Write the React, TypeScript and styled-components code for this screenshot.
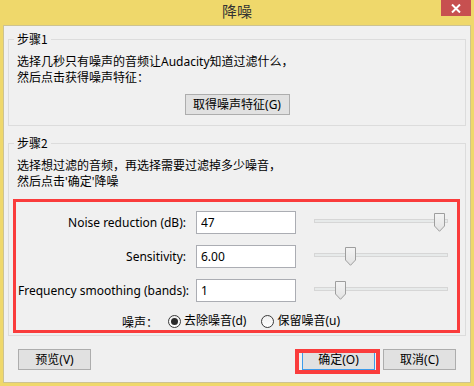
import { Fragment } from "react";
import styled, { createGlobalStyle } from "styled-components";

const GlobalStyle = createGlobalStyle`
  html, body {
    margin: 0;
    padding: 0;
    background: #efd86b;
  }
  body {
    font-family: "Noto Sans", "Noto Sans CJK SC", sans-serif;
    font-size: 12px;
    color: #000;
  }
`;

type SliderRowType = {
    label: string
    value: string
    pos: number
}

const rows: SliderRowType[] = [
    { label: "Noise reduction (dB):", value: "47", pos: 47 / 48 },
    { label: "Sensitivity:", value: "6.00", pos: 6 / 24 },
    { label: "Frequency smoothing (bands):", value: "1", pos: 1 / 6 },
];

const THUMB_TRAVEL = 123;

const Thumb = () => (
    <svg width="11" height="19" viewBox="0 0 11 19">
        <defs>
            <linearGradient id="thumbFill" x1="0" y1="0" x2="0" y2="1">
                <stop offset="0" stopColor="#f4f4f4" />
                <stop offset="1" stopColor="#e2e2e2" />
            </linearGradient>
        </defs>
        <path d="M0.5 0.5 H10.5 V13 L5.5 18.3 L0.5 13 Z" fill="url(#thumbFill)" stroke="#9e9e9e" />
    </svg>
);

const Radio = (props: { checked?: boolean, text: string }) => {
    return (
        <RadioOption>
            <RadioCircle>{props.checked && <RadioDot />}</RadioCircle>
            <span>{props.text}</span>
        </RadioOption>
    );
}

export default function App() {
    return (
        <>
            <GlobalStyle />
            <Window>
                <TitleBar>
                    <Title>降噪</Title>
                    <CloseButton>
                        <svg width="10" height="9" viewBox="0 0 10 9">
                            <path d="M1 0.5 L9 8.5 M9 0.5 L1 8.5" stroke="#fff" strokeWidth="2" />
                        </svg>
                    </CloseButton>
                </TitleBar>
                <Content>
                    <Group $pad="7px 5px 10px">
                        <Legend>步骤1</Legend>
                        <Description>
                            选择几秒只有噪声的音频让Audacity知道过滤什么，<br />
                            然后点击获得噪声特征：
                        </Description>
                        <CenterRow>
                            <Button $width={105}>取得噪声特征(G)</Button>
                        </CenterRow>
                    </Group>
                    <Group $pad="7px 5px 2px" $top={9}>
                        <Legend>步骤2</Legend>
                        <Description>
                            选择想过滤的音频，再选择需要过滤掉多少噪音，<br />
                            然后点击'确定'降噪
                        </Description>
                        <Highlight>
                            {rows.map((r) => (
                                <Fragment key={r.label}>
                                    <FieldLabel>{r.label}</FieldLabel>
                                    <Field defaultValue={r.value} />
                                    <Slider>
                                        <Track />
                                        <ThumbWrap style={{ left: Math.round(r.pos * THUMB_TRAVEL) }}>
                                            <Thumb />
                                        </ThumbWrap>
                                    </Slider>
                                </Fragment>
                            ))}
                            <RadioRow>
                                <RadioTitle>噪声：</RadioTitle>
                                <Radio checked text="去除噪音(d)" />
                                <Radio text="保留噪音(u)" />
                            </RadioRow>
                        </Highlight>
                    </Group>
                    <Footer>
                        <Button $width={73}>预览(V)</Button>
                        <FooterRight>
                            <Annotated>
                                <Button $width={73} $primary>确定(O)</Button>
                            </Annotated>
                            <Button $width={73}>取消(C)</Button>
                        </FooterRight>
                    </Footer>
                </Content>
            </Window>
        </>
    );
}

const Window = styled.div`
    width: 474px;
    height: 386px;
    display: flex;
    flex-direction: column;
    background: #efd86b;
`

const TitleBar = styled.div`
    height: 25px;
    display: grid;
    grid-template-columns: 1fr auto 1fr;
    align-items: start;
    padding: 0 3px;
`

const Title = styled.div`
    grid-column: 2;
    font-family: "Noto Sans CJK SC", sans-serif;
    font-size: 15px;
    line-height: 21px;
    color: #333;
`

const CloseButton = styled.div`
    grid-column: 3;
    justify-self: end;
    width: 30px;
    height: 16px;
    background: #c75050;
    display: flex;
    align-items: center;
    justify-content: center;
`

const Content = styled.div`
    flex: 1;
    margin: 0 3px 3px;
    padding: 5px 4px 0;
    background: #f0f0f0;
    border: 1px solid #cdc391;
    display: flex;
    flex-direction: column;
`

const Group = styled.fieldset<{ $pad: string, $top?: number }>`
    margin: ${(p) => p.$top || 0}px 0 0;
    padding: ${(p) => p.$pad};
    border: 1px solid #dcdcdc;
    min-width: 0;
`

const Legend = styled.legend`
    padding: 0 3px;
    line-height: 16px;
    font-family: "Noto Sans CJK SC", sans-serif;
`

const Description = styled.p`
    margin: 0;
    padding-left: 3px;
    line-height: 16px;
`

const CenterRow = styled.div`
    display: flex;
    justify-content: center;
    margin-top: 8px;
`

const Button = styled.button<{ $width: number, $primary?: boolean }>`
    width: ${(p) => p.$width}px;
    height: 21px;
    padding: 0;
    background: #e1e1e1;
    border: 1px solid ${(p) => (p.$primary ? "#3c9bea" : "#adadad")};
    font-family: inherit;
    font-size: 12px;
    line-height: 19px;
    color: #000;
`

const Highlight = styled.div`
    margin: 9px 0 0 -1px;
    border: 3px solid #fa3c3c;
    padding: 9px 9px 1px 2px;
    display: grid;
    grid-template-columns: 168px 100px 142px;
    column-gap: 10px;
    row-gap: 11px;
`

const FieldLabel = styled.div`
    align-self: center;
    text-align: right;
    white-space: nowrap;
    line-height: 16px;
`

const Field = styled.input`
    box-sizing: border-box;
    width: 100px;
    height: 23px;
    border: 1px solid #abadb3;
    padding: 0 4px;
    font-family: inherit;
    font-size: 12px;
    color: #000;
    background: #fff;
    outline: none;
`

const Slider = styled.div`
    position: relative;
    margin-left: 8px;
    width: 134px;
    height: 23px;
`

const Track = styled.div`
    box-sizing: border-box;
    margin-top: 8px;
    height: 4px;
    background: #e7eaea;
    border: 1px solid #d6d6d6;
`

const ThumbWrap = styled.div`
    position: absolute;
    top: 2px;
    width: 11px;
    height: 19px;
    line-height: 0;
`

const RadioRow = styled.div`
    grid-column: 1 / -1;
    display: flex;
    justify-content: center;
    align-items: center;
    height: 16px;
    margin-left: -4px;
    gap: 15px;
`

const RadioTitle = styled.span`
    margin-right: -5px;
    font-family: "Noto Sans CJK SC", sans-serif;
`

const RadioOption = styled.span`
    display: flex;
    align-items: center;
    gap: 3px;
    line-height: 16px;
`

const RadioCircle = styled.span`
    box-sizing: border-box;
    width: 13px;
    height: 13px;
    border-radius: 50%;
    border: 1px solid #3a3a3a;
    background: linear-gradient(#f0f0f0, #ffffff);
    display: flex;
    align-items: center;
    justify-content: center;
`

const RadioDot = styled.span`
    width: 7px;
    height: 7px;
    border-radius: 50%;
    background: #2a2a2a;
`

const Footer = styled.div`
    display: flex;
    justify-content: space-between;
    padding: 13px 10px 0;
`

const FooterRight = styled.div`
    display: flex;
    gap: 8px;
`

const Annotated = styled.div`
    position: relative;
    display: flex;

    &::after {
        content: "";
        position: absolute;
        left: -7px;
        right: -5px;
        top: 0;
        bottom: -4px;
        border: 4px solid #fa3c3c;
        pointer-events: none;
    }
`
